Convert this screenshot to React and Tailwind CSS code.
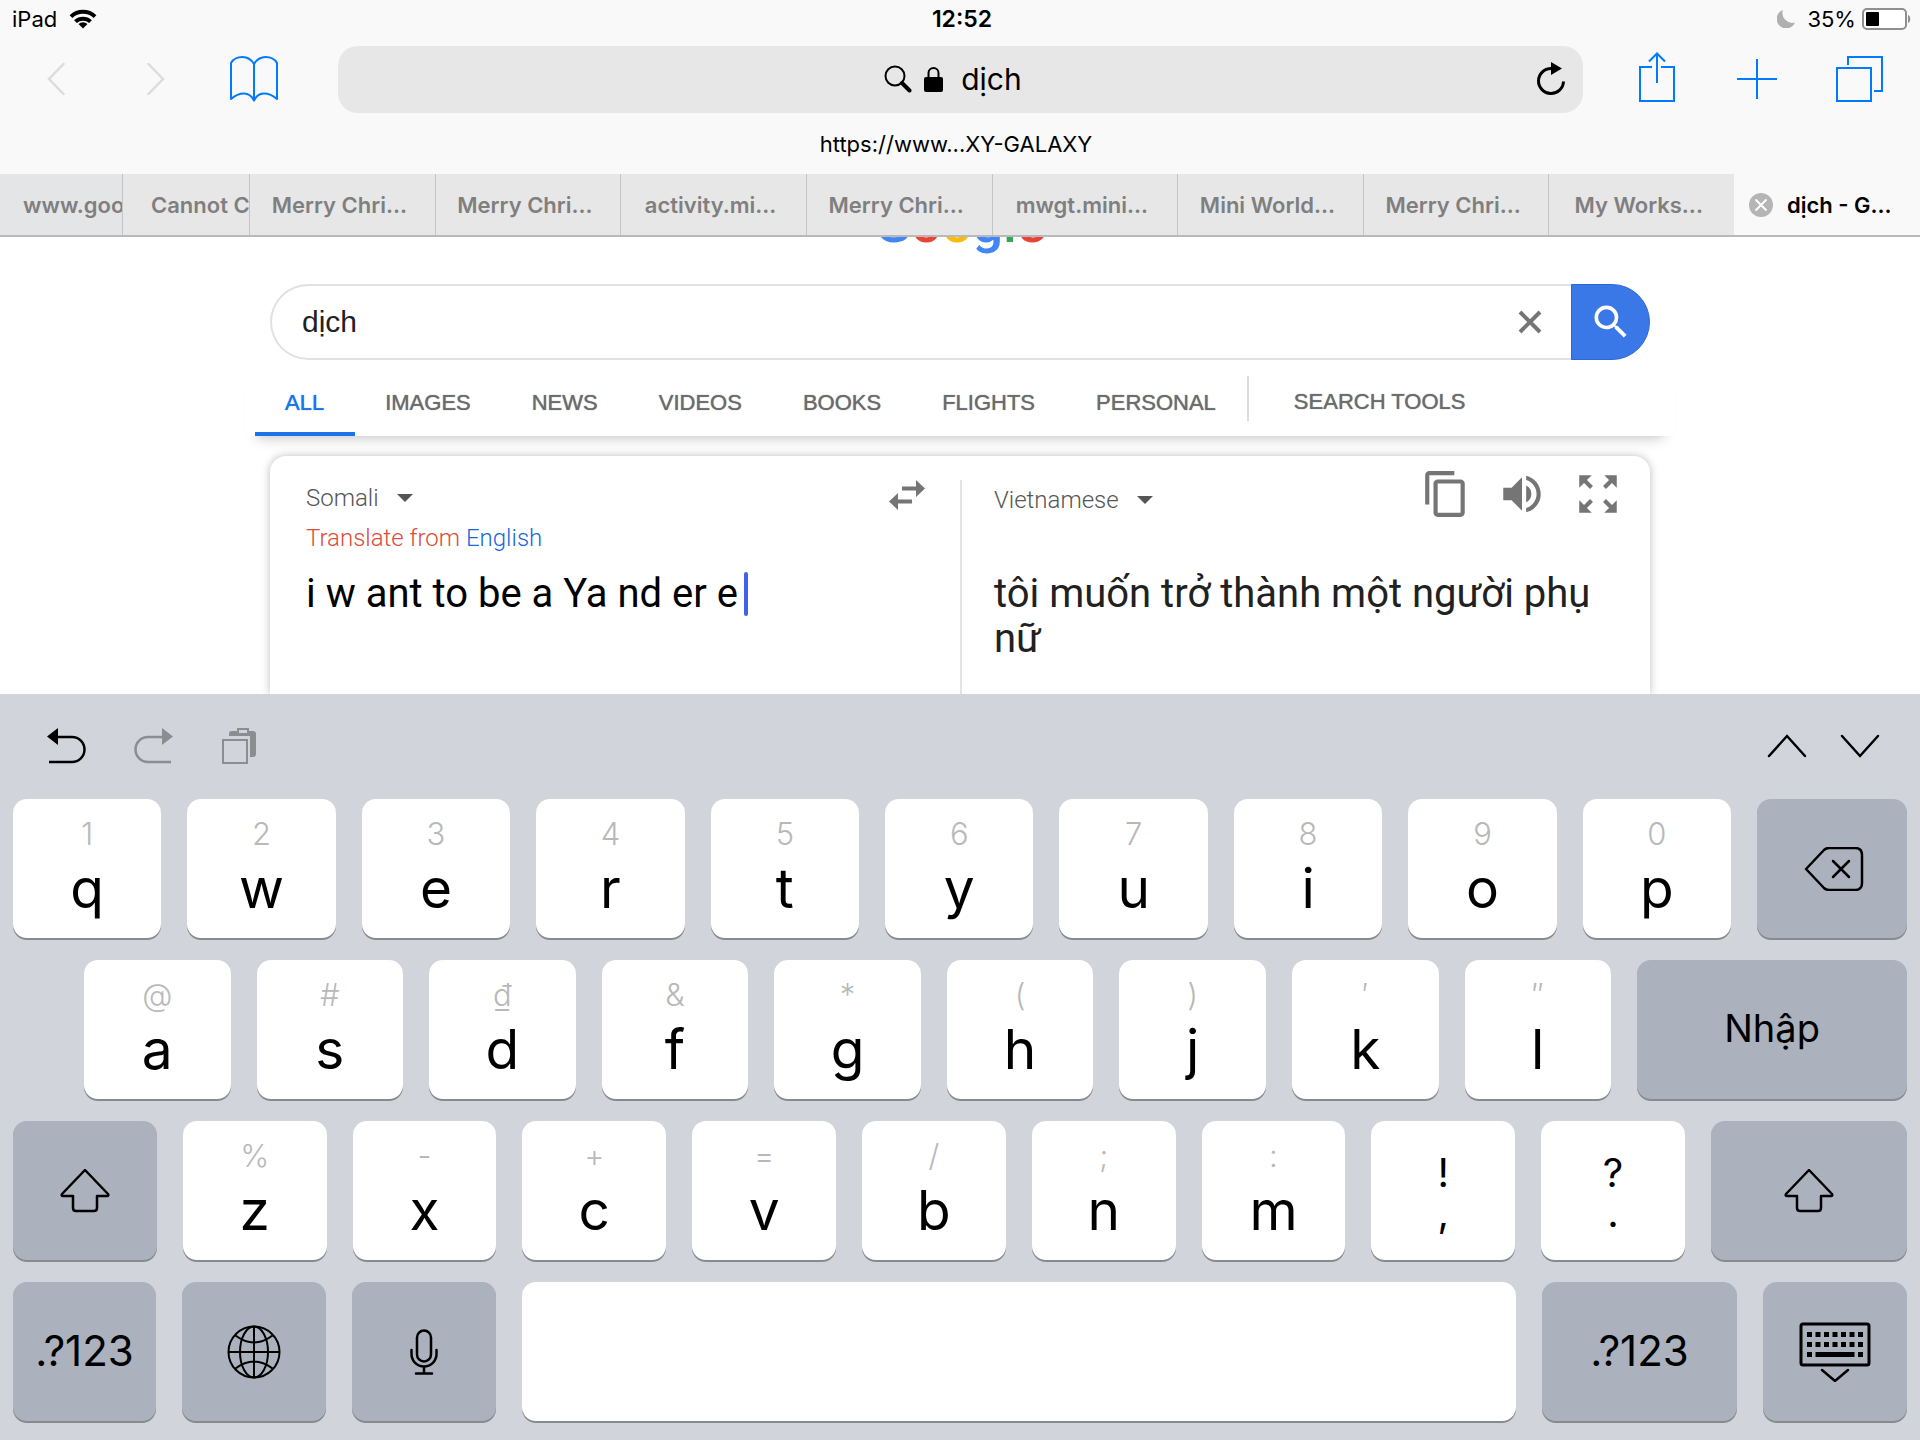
import { useState } from 'react';
import { MdContentCopy, MdSearch, MdVolumeUp, MdZoomOutMap } from 'react-icons/md';

const TABS = [
  'Merry Chri...',
  'Merry Chri...',
  'activity.mi...',
  'Merry Chri...',
  'mwgt.mini...',
  'Mini World...',
  'Merry Chri...',
  'My Works...'
];

const FILTERS = ['ALL', 'IMAGES', 'NEWS', 'VIDEOS', 'BOOKS', 'FLIGHTS', 'PERSONAL'];

const ROW_ONE = [
  ['1', 'q'], ['2', 'w'], ['3', 'e'], ['4', 'r'], ['5', 't'],
  ['6', 'y'], ['7', 'u'], ['8', 'i'], ['9', 'o'], ['0', 'p']
];

const ROW_TWO = [
  ['@', 'a'], ['#', 's'], ['₫', 'd'], ['&', 'f'], ['*', 'g'],
  ['(', 'h'], [')', 'j'], ['′', 'k'], ['″', 'l']
];

const ROW_THREE = [
  ['%', 'z'], ['-', 'x'], ['+', 'c'], ['=', 'v'], ['/', 'b'], [';', 'n'], [':', 'm']
];

const StatusBar = () => (
  <div className="grid grid-cols-3 items-center h-[38px] mb-0.5 pl-3 pr-2 text-[22px] leading-9">
    <div className="flex items-center gap-3">
      <span>iPad</span>
      <svg width="28" height="20" viewBox="0 0 28 20" fill="none" stroke="#000" strokeWidth="4">
        <path d="M2 7.6a17.5 17.5 0 0 1 24 0" />
        <path d="M6.5 12.6a11 11 0 0 1 15 0" />
        <path d="M14 19.5l-4.5-4.6a6.6 6.6 0 0 1 9 0z" fill="#000" stroke="none" />
      </svg>
    </div>
    <span className="text-center text-[23px] font-semibold">12:52</span>
    <div className="flex items-center justify-end">
      <svg width="18" height="18" viewBox="0 0 18 18" className="mr-3">
        <path d="M6 0a9.5 9.5 0 1 0 12 12.5A9.8 9.8 0 0 1 6 0z" fill="#b0b0b0" />
      </svg>
      <span className="mr-1.5">35%</span>
      <svg width="50" height="22" viewBox="0 0 50 22">
        <rect x="1" y="1" width="43" height="20" rx="4" fill="#fff" stroke="#8f8f8f" strokeWidth="2" />
        <rect x="4" y="4" width="13" height="14" rx="1" fill="#000" />
        <path d="M46 7c3 1 3 7 0 8z" fill="#8f8f8f" />
      </svg>
    </div>
  </div>
);

const Toolbar = () => (
  <div className="flex items-center h-[78px] pl-[47px] pr-9 text-[#007aff]">
    <button type="button" aria-label="Back" className="mr-[82px]">
      <svg width="18" height="34" viewBox="0 0 18 34" fill="none" stroke="#dcdcdc" strokeWidth="2.5" strokeLinecap="round">
        <path d="M16.5 2L2 17l14.5 15" />
      </svg>
    </button>
    <button type="button" aria-label="Forward" className="mr-[65px]">
      <svg width="18" height="34" viewBox="0 0 18 34" fill="none" stroke="#dcdcdc" strokeWidth="2.5" strokeLinecap="round">
        <path d="M1.5 2L16 17L1.5 32" />
      </svg>
    </button>
    <button type="button" aria-label="Bookmarks" className="mr-[60px]">
      <svg width="48" height="46" viewBox="0 0 48 46" fill="none" stroke="currentColor" strokeWidth="2" strokeLinejoin="round">
        <path d="M24 8C21 3 17 1 12.5 1C7 1 3 3.5 1 7v36c4-3.5 8-5.5 13-5.5c5 0 8 3 10 7c2-4 5-7 10-7c5 0 9 2 13 5.5V7C45 3.5 41 1 35.5 1C31 1 27 3 24 8z" />
        <path d="M24 8v36" />
      </svg>
    </button>

    <div className="flex flex-1 items-center h-[67px] rounded-[20px] bg-[#e7e7e8] pr-[17px] text-black">
      <div className="flex flex-1 items-center justify-center pl-8">
        <svg width="28" height="28" viewBox="0 0 28 28" fill="none" stroke="#000" className="mr-3">
          <circle cx="11" cy="11" r="9.5" strokeWidth="2" />
          <path d="M18 18l7.5 7.5" strokeWidth="4" strokeLinecap="round" />
        </svg>
        <svg width="19" height="26" viewBox="0 0 19 26" className="mr-[18px]">
          <path d="M4.5 13V7a5 5 0 0 1 10 0v6" fill="none" stroke="#000" strokeWidth="2" />
          <rect x="0" y="11" width="19" height="15" rx="2" />
        </svg>
        <input
          aria-label="Address"
          defaultValue="dịch"
          className="field-sizing-content text-[30px] leading-10 outline-none"
        />
      </div>
      <button type="button" aria-label="Reload">
        <svg width="30" height="34" viewBox="0 0 30 34">
          <path d="M15 6.5a12.5 12.5 0 1 0 12.5 13" fill="none" stroke="#000" strokeWidth="3" />
          <path d="M15 0l11 6.5L15 13z" />
        </svg>
      </button>
    </div>

    <button type="button" aria-label="Share" className="ml-[55px] mr-[61px] pb-1">
      <svg width="38" height="50" viewBox="0 0 38 50" fill="none" stroke="currentColor" strokeWidth="2">
        <path d="M14 15H2v34h34V15H23" />
        <path d="M19 31V2M11 9.5L19 1.5l8 8" />
      </svg>
    </button>
    <button type="button" aria-label="New tab" className="mr-[59px]">
      <svg width="40" height="40" viewBox="0 0 40 40" stroke="currentColor" strokeWidth="2">
        <path d="M20 0v40M0 20h40" />
      </svg>
    </button>
    <button type="button" aria-label="Show all tabs">
      <svg width="48" height="46" viewBox="0 0 48 46" fill="none" stroke="currentColor" strokeWidth="2">
        <path d="M1 12h34v33H1z" />
        <path d="M12 9V1h34v34h-8" />
      </svg>
    </button>
  </div>
);

const TabStrip = () => (
  <div className="flex h-[63px] border-b-2 border-[#b9b9bb] bg-[#e7e7e8] text-[22px] leading-[62px] font-semibold text-[#7f7f80]">
    <button type="button" className="w-[122px] shrink-0 overflow-hidden whitespace-nowrap pl-[23px] text-left bg-[#e4e5e7]">
      www.goo
    </button>
    <button type="button" className="w-[127px] shrink-0 overflow-hidden whitespace-nowrap border-l border-[#c4c4c6] pl-7 text-left">
      Cannot C
    </button>
    {TABS.map((title, i) => (
      <button
        key={i}
        type="button"
        className="flex-1 overflow-hidden whitespace-nowrap border-l border-[#c4c4c6] pr-1.5 text-center"
      >
        {title}
      </button>
    ))}
    <div className="flex w-[186px] shrink-0 items-center bg-[#f9f9f9] pl-[15px] text-black whitespace-nowrap">
      <button type="button" aria-label="Close tab" className="mr-3.5">
        <svg width="24" height="24" viewBox="0 0 24 24">
          <circle cx="12" cy="12" r="12" fill="#b5b5b6" />
          <path d="M6.5 6.5l11 11M17.5 6.5l-11 11" stroke="#fff" strokeWidth="2" />
        </svg>
      </button>
      <span>dịch - G...</span>
    </div>
  </div>
);

// Scrolled mostly under the tab strip, only the bottom edge shows
const Logo = () => (
  <div className="flex justify-center h-[18px] items-end overflow-hidden font-['Roboto'] text-[54px] leading-[62px] font-medium">
    <span className="text-[#4285f4]">G</span>
    <span className="text-[#ea4335]">o</span>
    <span className="text-[#fbbc05]">o</span>
    <span className="text-[#4285f4]">g</span>
    <span className="text-[#34a853]">l</span>
    <span className="text-[#ea4335]">e</span>
  </div>
);

const LanguageSelect = ({ label, options }) => (
  <label className="inline-flex items-center gap-[18px] font-['Roboto'] text-[24px] leading-8 font-light text-[#555]">
    <select aria-label={label} className="appearance-none field-sizing-content outline-none">
      {options.map((option) => (
        <option key={option}>{option}</option>
      ))}
    </select>
    <svg width="16" height="8" viewBox="0 0 16 8" fill="#555">
      <path d="M0 0h16L8 8z" />
    </svg>
  </label>
);

const Translator = () => (
  <section className="grid grid-cols-2 flex-1 mt-5 rounded-t-[16px] bg-white shadow-[0_0_8px_rgba(60,64,67,0.35)]">
    <div className="flex flex-col pl-9 pr-[34px] pt-6">
      <div className="flex justify-between items-start">
        <div className="pt-0.5">
          <LanguageSelect label="Source language" options={['Somali', 'English']} />
        </div>
        <button type="button" aria-label="Swap languages">
          <svg width="38" height="30" viewBox="0 0 38 30" fill="#757575">
            <path d="M14 6.5h14V0l9 8.5l-9 8.5v-6.5H14zM24 19.5H10V13l-9 8.5L10 30v-6.5h14z" />
          </svg>
        </button>
      </div>
      <p className="mt-2 font-['Roboto'] text-[24px] leading-8 font-light text-[#dd4b39]">
        Translate from <a href="#english" className="text-[#1a67d8]">English</a>
      </p>
      <div className="flex items-center mt-[17px] gap-1.5">
        <input
          aria-label="Text to translate"
          defaultValue="i w ant to be a Ya nd er e"
          className="field-sizing-content font-['Roboto'] text-[40px] leading-[46px] text-black outline-none"
        />
        <span className="w-1 h-11 rounded-full bg-[#3f62ea]" />
      </div>
    </div>

    <div className="flex flex-col pr-[27px] pt-4">
      <div className="flex flex-1 flex-col border-l-2 border-[#e4e4e4] mt-2 pl-8">
        <div className="flex justify-between items-start">
          <div className="pt-1">
            <LanguageSelect label="Target language" options={['Vietnamese', 'English']} />
          </div>
          <div className="flex items-center h-7 gap-[26px] text-[#757575]">
            <button type="button" aria-label="Copy"><MdContentCopy size={50} /></button>
            <button type="button" aria-label="Listen"><MdVolumeUp size={50} /></button>
            <button type="button" aria-label="Full screen"><MdZoomOutMap size={50} /></button>
          </div>
        </div>
        <p className="mt-[55px] font-['Roboto'] text-[40px] leading-[45px] text-[#212121]">
          tôi muốn trở thành một người phụ nữ
        </p>
      </div>
    </div>
  </section>
);

const SearchPage = () => {
  const [query, setQuery] = useState('dịch');

  return (
    <main className="flex flex-1 flex-col min-h-0 overflow-hidden bg-white px-6">
      <Logo />
      <div className="flex flex-1 flex-col w-full max-w-[1430px] mx-auto">
        <form className="flex h-[76px] mt-[29px] mx-[25px]" onSubmit={(e) => e.preventDefault()}>
          <div className="flex flex-1 items-center rounded-l-full border-2 border-r-0 border-[#dfe1e5] pl-[30px] pr-[29px]">
            <input
              aria-label="Search"
              value={query}
              onChange={(e) => setQuery(e.target.value)}
              className="flex-1 font-['Liberation_Sans'] text-[30px] leading-10 text-[#212121] outline-none"
            />
            <button type="button" aria-label="Clear" onClick={() => setQuery('')}>
              <svg width="24" height="24" viewBox="0 0 24 24" stroke="#757575" strokeWidth="4">
                <path d="M2 2l20 20M22 2L2 22" />
              </svg>
            </button>
          </div>
          <button
            type="submit"
            aria-label="Search"
            className="flex items-center justify-center w-[79px] rounded-r-full border border-[#2f66d6] bg-[#3b78e7] text-white"
          >
            <MdSearch size={44} />
          </button>
        </form>

        {/* Result type filters */}
        <nav className="flex items-center h-[76px] pl-2.5 bg-white font-['Liberation_Sans'] text-[22px] text-[#6c6c6c] shadow-[0_14px_12px_-12px_rgba(60,64,67,0.3)] text-shadow-[0_0_1px_currentColor]">
          {FILTERS.map((filter, i) => (
            <a
              key={filter}
              href={`#${filter.toLowerCase()}`}
              className={`flex items-center h-full pl-[30px] pr-[31px] border-b-4 pt-3 ${
                i === 0 ? 'border-[#1a73e8] text-[#1a73e8]' : 'border-transparent'
              }`}
            >
              {filter}
            </a>
          ))}
          <a href="#tools" className="border-l-2 border-[#dadce0] h-[45px] leading-[51px] pl-[45px]">
            SEARCH TOOLS
          </a>
        </nav>

        <div className="flex flex-1 flex-col mx-[25px]">
          <Translator />
        </div>
      </div>
    </main>
  );
};

const Key = ({ hint, letter }) => (
  <button
    type="button"
    className="flex flex-1 flex-col items-center pt-[15px] rounded-[14px] bg-white shadow-[0_2px_0_#898a8d]"
  >
    <span className="text-[31px] leading-10 font-light text-[#b9b9b9]">{hint}</span>
    <span className="text-[55px] leading-[68px]">{letter}</span>
  </button>
);

const PunctuationKey = ({ top, bottom }) => (
  <button
    type="button"
    className="flex flex-1 flex-col items-center pt-8 rounded-[14px] bg-white shadow-[0_2px_0_#898a8d] text-[40px] leading-10"
  >
    <span>{top}</span>
    <span>{bottom}</span>
  </button>
);

const DarkKey = ({ label, size, children }) => (
  <button
    type="button"
    aria-label={label}
    className={`flex items-center justify-center rounded-[14px] bg-[#abb2bd] shadow-[0_2px_0_#898a8d] ${size}`}
  >
    {children}
  </button>
);

const ShiftIcon = () => (
  <svg width="50" height="44" viewBox="0 0 50 44" fill="none" stroke="#000" strokeWidth="2.5" strokeLinejoin="round">
    <path d="M25 1L48 25q1 2-1 2H37v12q0 3-3 3H16q-3 0-3-3V27H3q-2 0-1-2z" />
  </svg>
);

const KeyboardIcon = () => (
  <svg width="72" height="60" viewBox="0 0 72 60">
    <rect x="2" y="2" width="68" height="41" rx="2" fill="none" stroke="#000" strokeWidth="3" />
    {[8, 16.5, 25, 33.5, 42, 50.5, 59].map((x) => (
      <g key={x}>
        <rect x={x} y="10" width="5" height="5" />
        <rect x={x} y="20" width="5" height="5" />
      </g>
    ))}
    <rect x="8" y="30" width="5" height="5" />
    <rect x="16.5" y="30" width="39" height="5" />
    <rect x="59" y="30" width="5" height="5" />
    <path d="M23 48l13 11l13-11" fill="none" stroke="#000" strokeWidth="2.5" strokeLinecap="round" />
  </svg>
);

const Keyboard = () => (
  <section className="bg-[#d1d4db] px-[13px] pb-[19px]">
    <div className="flex items-center h-[105px] pl-[34px] pr-[27px] pb-0.5">
      <button type="button" aria-label="Undo" className="mr-[46px]">
        <svg width="40" height="36" viewBox="0 0 40 36">
          <path d="M8 9h17a12.5 12.5 0 0 1 0 25H2" fill="none" stroke="#000" strokeWidth="2.5" />
          <path d="M0 8.5L11 0v17z" />
        </svg>
      </button>
      <button type="button" aria-label="Redo" className="mr-[49px]">
        <svg width="40" height="36" viewBox="0 0 40 36">
          <path d="M32 9H15a12.5 12.5 0 0 0 0 25h23" fill="none" stroke="#8b8d91" strokeWidth="2.5" />
          <path d="M40 8.5L29 0v17z" fill="#8b8d91" />
        </svg>
      </button>
      <button type="button" aria-label="Paste">
        <svg width="35" height="36" viewBox="0 0 35 36">
          <path d="M7 8V6q0-3 3-3h21q3 0 3 3v20q0 3-3 3h-3V8z" fill="#8b8d91" />
          <rect x="16" y="1" width="10" height="5" fill="#d1d4db" stroke="#8b8d91" strokeWidth="2" />
          <rect x="1" y="12" width="24" height="23" fill="#d1d4db" stroke="#8b8d91" strokeWidth="2" />
        </svg>
      </button>
      <button type="button" aria-label="Previous field" className="ml-auto mr-[33px]">
        <svg width="40" height="24" viewBox="0 0 40 24" fill="none" stroke="#000" strokeWidth="2.5" strokeLinecap="round">
          <path d="M2 22L20 2l18 20" />
        </svg>
      </button>
      <button type="button" aria-label="Next field">
        <svg width="40" height="24" viewBox="0 0 40 24" fill="none" stroke="#000" strokeWidth="2.5" strokeLinecap="round">
          <path d="M2 2l18 20L38 2" />
        </svg>
      </button>
    </div>

    <div className="flex flex-col gap-[22px]">
      <div className="flex h-[139px] gap-[26px]">
        {ROW_ONE.map(([hint, letter]) => (
          <Key key={letter} hint={hint} letter={letter} />
        ))}
        <DarkKey label="Delete" size="w-[150px] pl-1">
          <svg width="60" height="44" viewBox="0 0 60 44" fill="none" stroke="#000" strokeWidth="2.5" strokeLinejoin="round">
            <path d="M2 22L20 3q2-2 5-2h26q7 0 7 7v28q0 7-7 7H25q-3 0-5-2z" />
            <path d="M29 14l16 16M45 14L29 30" strokeLinecap="round" />
          </svg>
        </DarkKey>
      </div>

      <div className="flex h-[139px] gap-[26px] pl-[71px]">
        {ROW_TWO.map(([hint, letter]) => (
          <Key key={letter} hint={hint} letter={letter} />
        ))}
        <DarkKey size="w-[270px] pb-0.5 text-[38px]">Nhập</DarkKey>
      </div>

      <div className="flex h-[139px] gap-[26px]">
        <DarkKey label="Shift" size="flex-1"><ShiftIcon /></DarkKey>
        {ROW_THREE.map(([hint, letter]) => (
          <Key key={letter} hint={hint} letter={letter} />
        ))}
        <PunctuationKey top="!" bottom="," />
        <PunctuationKey top="?" bottom="." />
        <DarkKey label="Shift" size="w-[196px]"><ShiftIcon /></DarkKey>
      </div>

      <div className="flex h-[139px] gap-[26px]">
        <DarkKey size="w-[143px] pb-0.5 text-[42px]">.?123</DarkKey>
        <DarkKey label="Next keyboard" size="w-36">
          <svg width="54" height="54" viewBox="0 0 54 54" fill="none" stroke="#000" strokeWidth="2">
            <circle cx="27" cy="27" r="25.5" />
            <ellipse cx="27" cy="27" rx="14" ry="25.5" />
            <path d="M27 1.5v51M1.5 27h51M8.5 10.5q18.5 14 37 0M8.5 43.5q18.5-14 37 0" />
          </svg>
        </DarkKey>
        <DarkKey label="Dictate" size="w-36">
          <svg width="28" height="46" viewBox="0 0 28 46" fill="none" stroke="#000" strokeWidth="2.5" strokeLinecap="round">
            <rect x="7" y="1.5" width="14" height="31" rx="7" />
            <path d="M1.5 21v4a12.5 12.5 0 0 0 25 0v-4M14 38v6M6 44.5h16" />
          </svg>
        </DarkKey>
        <button
          type="button"
          aria-label="Space"
          className="flex-1 rounded-[14px] bg-white shadow-[0_2px_0_#898a8d]"
        />
        <DarkKey size="w-[195px] pb-0.5 text-[42px]">.?123</DarkKey>
        <DarkKey label="Hide keyboard" size="w-36"><KeyboardIcon /></DarkKey>
      </div>
    </div>
  </section>
);

export default function App() {
  return (
    <div className="flex h-screen flex-col bg-[#f9f9f9] font-['Inter',sans-serif] text-black">
      <StatusBar />
      <Toolbar />
      <div className="flex h-14 items-center justify-center pr-2 pb-1 text-[22px]">
        <a href="#galaxy">https://www...XY-GALAXY</a>
      </div>
      <TabStrip />
      <SearchPage />
      <Keyboard />
    </div>
  );
}
